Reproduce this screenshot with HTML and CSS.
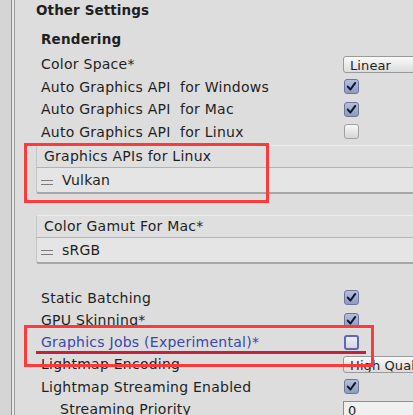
FILE: index.html
```html
<!DOCTYPE html>
<html>
<head>
<meta charset="utf-8">
<link rel="stylesheet" href="styles.css">
</head>
<body>
<div class="inspector">
  <div class="gutter"></div>
  <div class="content">
    <div class="section-title">Other Settings</div>
    <div class="sub-title">Rendering</div>

    <div class="row r22"><span class="label">Color Space*</span><div class="dropdown">Linear</div></div>
    <div class="row r23"><span class="label">Auto Graphics API&nbsp; for Windows</span><span class="check on"><svg viewBox="0 0 15 15"><path d="M3.2 7.6 L6.3 11 L11.8 3.4"/></svg></span></div>
    <div class="row r22"><span class="label">Auto Graphics API&nbsp; for Mac</span><span class="check on"><svg viewBox="0 0 15 15"><path d="M3.2 7.6 L6.3 11 L11.8 3.4"/></svg></span></div>
    <div class="row r23"><span class="label">Auto Graphics API&nbsp; for Linux</span><span class="check"></span></div>

    <div class="list first">
      <div class="list-header">Graphics APIs for Linux</div>
      <div class="list-item"><span class="handle"></span>Vulkan</div>
    </div>
    <div class="list second">
      <div class="list-header">Color Gamut For Mac*</div>
      <div class="list-item"><span class="handle"></span>sRGB</div>
    </div>

    <div class="rows-bottom">
      <div class="row r23"><span class="label">Static Batching</span><span class="check on"><svg viewBox="0 0 15 15"><path d="M3.2 7.6 L6.3 11 L11.8 3.4"/></svg></span></div>
      <div class="row r22"><span class="label">GPU Skinning*</span><span class="check on"><svg viewBox="0 0 15 15"><path d="M3.2 7.6 L6.3 11 L11.8 3.4"/></svg></span></div>
      <div class="row r22"><span class="label blue">Graphics Jobs (Experimental)*</span><span class="check focus"></span></div>
      <div class="row r22"><span class="label">Lightmap Encoding</span><div class="dropdown">High Qual</div></div>
      <div class="row r23"><span class="label">Lightmap Streaming Enabled</span><span class="check on"><svg viewBox="0 0 15 15"><path d="M3.2 7.6 L6.3 11 L11.8 3.4"/></svg></span></div>
      <div class="row r22"><span class="label indent">Streaming Priority</span><div class="field">0</div></div>
    </div>
  </div>

  <div class="mark box-one"></div>
  <div class="mark box-two"></div>
  <div class="mark underline"></div>
</div>
</body>
</html>
```

FILE: styles.css
```css
html, body {
  margin: 0;
  padding: 0;
}
body {
  width: 413px;
  height: 415px;
  overflow: hidden;
  background: #dddddd;
  font-family: "DejaVu Sans", Verdana, sans-serif;
  font-size: 14px;
  letter-spacing: 0.25px;
  color: #1f1f1f;
}
.inspector {
  position: relative;
  display: flex;
  height: 415px;
}
.gutter {
  width: 11px;
  flex: none;
  background: #d5d5d5;
  border-right: 1px solid #8c8c8c;
  box-shadow: 2px 0 0 #e8e8e8, 3px 0 0 #9c9c9c;
  margin-right: 3px;
}
.content {
  flex: 1;
  min-width: 0;
}
.section-title {
  height: 20px;
  line-height: 20px;
  padding-left: 21px;
  font-weight: bold;
  font-size: 13.5px;
  letter-spacing: 0.1px;
}
.sub-title {
  margin-top: 8px;
  margin-bottom: 2px;
  height: 23px;
  line-height: 23px;
  padding-left: 26px;
  font-weight: bold;
  font-size: 13.5px;
  letter-spacing: 0.2px;
}
.row {
  display: grid;
  grid-template-columns: 302px 1fr;
  align-items: center;
  padding-left: 26px;
  white-space: nowrap;
}
.r22 { height: 22px; }
.r23 { height: 23px; }
.label { overflow: visible; }
.label.blue { color: #3a47ad; }
.label.indent { padding-left: 19px; }

.dropdown {
  height: 17px;
  line-height: 17px;
  width: 90px;
  box-sizing: border-box;
  border: 1px solid #9a9a9a;
  border-radius: 3px 0 0 3px;
  background: linear-gradient(#f9f9f9, #dcdcdc);
  padding-left: 6px;
  font-size: 13px;
  letter-spacing: 0.1px;
  overflow: hidden;
}
.field {
  height: 18px;
  line-height: 18px;
  width: 90px;
  box-sizing: border-box;
  border: 1px solid #8e8e8e;
  background: #f0f0f0;
  padding-left: 4px;
  font-size: 13px;
  margin-top: 2px;
}
.check {
  width: 15px;
  height: 15px;
  box-sizing: border-box;
  border: 1px solid #a0a0a0;
  border-radius: 3px;
  background: linear-gradient(#f7f7f7, #d6d6d6);
  margin-left: 1px;
}
.check.on {
  border-color: #6d7699;
  background: linear-gradient(#b4bfd9, #8e9bbf);
}
.check.focus {
  border: 2px solid #5d67b8;
  background: linear-gradient(#eceef4, #d4d6e2);
}
.check svg {
  display: block;
  width: 13px;
  height: 13px;
}
.check svg path {
  fill: none;
  stroke: #0c1430;
  stroke-width: 2.3;
  stroke-linecap: round;
  stroke-linejoin: round;
}

.list {
  margin-left: 21px;
  margin-right: -4px;
}
.list.first { margin-top: 3px; }
.list.second { margin-top: 22px; }
.list-header {
  height: 21px;
  line-height: 21px;
  padding-left: 7px;
  background: #dfdfdf;
  border-top: 1px solid #ececec;
  border-left: 1px solid #c6c6c6;
  border-bottom: 1px solid #b3b3b3;
  border-radius: 3px 0 0 0;
  margin-top: -1px;
}
.list-item {
  display: flex;
  align-items: center;
  height: 24px;
  padding-left: 4px;
  background: #e5e5e5;
  border-left: 1px solid #c6c6c6;
  border-bottom: 2px solid #a6a6a6;
  border-radius: 0 0 0 3px;
}
.handle {
  width: 12px;
  height: 5px;
  border-top: 1px solid #7c7c7c;
  border-bottom: 1px solid #7c7c7c;
  box-sizing: border-box;
  margin-right: 9px;
  margin-top: 5px;
}
.rows-bottom {
  margin-top: 22px;
}

.mark {
  position: absolute;
  box-sizing: border-box;
}
.box-one {
  left: 24px;
  top: 143px;
  width: 245px;
  height: 60px;
  border: 3px solid #fb3a3a;
}
.box-two {
  left: 24px;
  top: 325px;
  width: 350px;
  height: 42px;
  border: 3px solid #fb3a3a;
}
.underline {
  left: 36px;
  top: 351px;
  width: 330px;
  height: 3px;
  background: #c5203c;
}
```
